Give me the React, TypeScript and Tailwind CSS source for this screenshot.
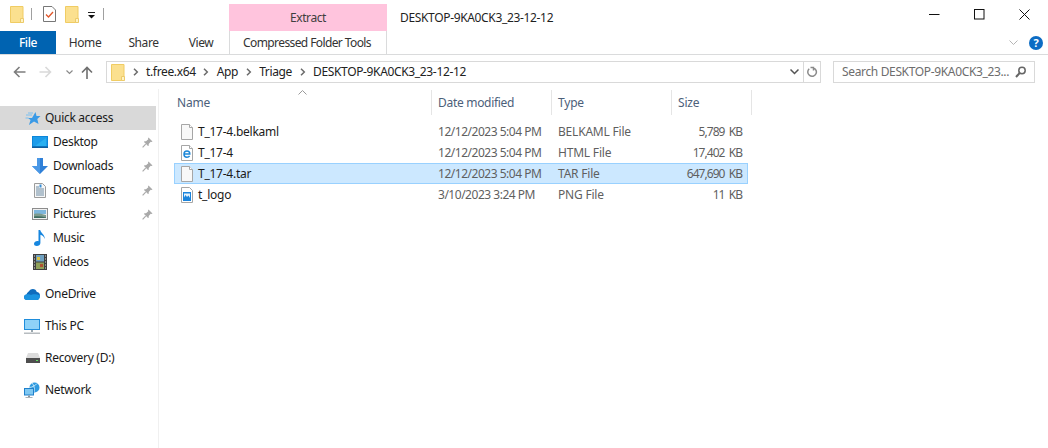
import React from "react";

const FolderIcon = () => (
  <svg width="14" height="17" viewBox="0 0 14 17" className="block shrink-0">
    <path d="M.5.5h12.500v16H.5z" fill="#fbe08f" stroke="#f0cc63" />
    <path d="M10.500 12.500h3v4h-3z" fill="#fff2c4" stroke="#eccb6a" />
  </svg>
);

const Chevron = () => (
  <svg width="6" height="8" viewBox="0 0 6 8" className="shrink-0 mx-[7.5px]">
    <path d="M1 .8 4.300 4 1 7.200" fill="none" stroke="#6b6b6b" strokeWidth="1.500" />
  </svg>
);

const Pin = () => (
  <svg width="11" height="11" viewBox="0 0 11 11" className="block">
    <path d="M6.500.5 10.500 4.500 9.500 5 8.700 4.700 6.700 7 6.700 8.700 6 9 2 5 2.400 4.300 4 4.300 6.300 2.300 6 1.300Z" fill="#a9a9a9" />
    <path d="M3.700 7.200.6 10.400" stroke="#a9a9a9" strokeWidth="1.200" />
  </svg>
);

const Star = () => (
  <svg width="16" height="15" viewBox="0 0 16 15" className="block">
    <path d="M10.500 1 11.500 5H15.500L12.300 8 13.500 13 9 10.500 4 14 5.500 9 3 7H7Z" fill="#3a9ae6" />
    <path d="M1 4h6M.5 7h3M3 2h5" stroke="#7cc0ef" strokeWidth="1" />
  </svg>
);

const Desktop = () => (
  <svg width="16" height="12" viewBox="0 0 16 12" className="block">
    <rect width="16" height="12" fill="#0c86d9" />
    <path d="M1 1h14v9H1z" fill="#1c9cea" />
    <path d="M3 10 14 2v8z" fill="#2bb0f0" />
    <path d="M0 10.500h16V12H0z" fill="#105e9c" />
  </svg>
);

const Downloads = () => (
  <svg width="16" height="16" viewBox="0 0 16 16" className="block">
    <path d="M5 0h6v8h5l-8 8-8-8h5z" fill="#2f80d8" />
    <path d="M5 0h3v16L0 8h5z" fill="#4a98e6" />
  </svg>
);

const Documents = () => (
  <svg width="12" height="15" viewBox="0 0 12 15" className="block">
    <path d="M.5.500h8l3 3v11H.5z" fill="#f7f7f7" stroke="#9c9c9c" />
    <path d="M2 4h3M2 6h8M2 8h8M2 10h8M2 12h8" stroke="#6d8ba3" />
    <path d="M5.500 1.500h2v3h-2z" fill="#3a90d8" />
  </svg>
);

const Pictures = () => (
  <svg width="16" height="12" viewBox="0 0 16 12" className="block">
    <rect x=".5" y=".5" width="15" height="11" fill="#f0f0f0" stroke="#8d8d8d" />
    <path d="M2 2h12v4H2z" fill="#7eb6dc" />
    <path d="M2 6c4-1 8 0 12 1v3H2z" fill="#7d9b8e" />
    <path d="M2 8.500c4-.5 8 0 12 1V10H2z" fill="#3e6c60" />
  </svg>
);

const Music = () => (
  <svg width="12" height="16" viewBox="0 0 12 16" className="block">
    <path d="M4.500 0h1.700c.4 3 5 4.600 4.500 9-.8-2.500-2.600-3.800-4.300-4.200V13c0 1.800-1.800 3-3.600 3C1.100 16 0 15 0 13.700 0 12.200 1.800 11 3.300 11c.5 0 .9.100 1.200.3z" fill="#1686df" />
  </svg>
);

const Videos = () => (
  <svg width="14" height="16" viewBox="0 0 14 16" className="block">
    <rect width="14" height="16" fill="#3f3f3f" />
    <path d="M3 1h8v6.500H3z" fill="#6fa0c0" />
    <path d="M3 8.500h8V15H3z" fill="#8fa05a" />
    <path d="M4 3h3v3H4z" fill="#d8c040" />
    <path d="M7 10h3v3H7z" fill="#b05030" />
    <path d="M1 2h1M1 5h1M1 8h1M1 11h1M1 14h1M12 2h1M12 5h1M12 8h1M12 11h1M12 14h1" stroke="#dedede" />
  </svg>
);

const Cloud = () => (
  <svg width="16" height="11" viewBox="0 0 16 11" className="block">
    <path d="M3 11C1.200 11 0 9.800 0 8.300 0 6.800 1.100 5.800 2.500 5.600 3 3.500 4.300 2.800 5 2.200 6 .8 7.300 0 8.800 0c2 0 3.500 1.200 4 3 1.700.2 3.200 1.500 3.200 3.200 0 2.700-1.500 4.800-3 4.800z" fill="#0f6cbd" />
    <path d="M3 11C1.200 11 0 9.800 0 8.300 0 6.800 1.100 5.800 2.500 5.600 4 5 5.800 5 7 6c1-1 6-1 9 .5 0 2.500-1.500 4.500-3 4.500z" fill="#1b93e0" />
  </svg>
);

const ThisPC = () => (
  <svg width="16" height="15" viewBox="0 0 16 15" className="block">
    <rect width="16" height="11" fill="#1f8ddb" />
    <rect x="1" y="1" width="14" height="9" fill="#8ed2f8" />
    <path d="M7 11h2v2H7z" fill="#9aa6ae" />
    <path d="M0 13.500h16V15H0z" fill="#b7bcc0" />
  </svg>
);

const Drive = () => (
  <svg width="14" height="10" viewBox="0 0 14 10" className="block">
    <path d="M2 0h10l2 5H0z" fill="#dcdcdc" />
    <rect y="5" width="14" height="5" fill="#4e4e4e" />
    <rect x="10" y="7" width="2" height="1" fill="#5fe05f" />
  </svg>
);

const Network = () => (
  <svg width="16" height="16" viewBox="0 0 16 16" className="block">
    <circle cx="10.500" cy="5.500" r="5" fill="#2f9ae0" />
    <path d="M8 1c2 2 3 6 2 9M13 1.500c-1.500 2-5 4-8 4" stroke="#bfe3f6" fill="none" />
    <rect y="6" width="10" height="7.500" fill="#1f80cc" />
    <rect x="1" y="7" width="8" height="5.500" fill="#7fc8f2" />
    <path d="M4 13.500h2V15H4z" fill="#8a96a0" />
    <path d="M1.500 15h7v1h-7z" fill="#a9b1b7" />
  </svg>
);

const BlankFile = () => (
  <svg width="12" height="16" viewBox="0 0 12 16" className="block">
    <path d="M.5.500h8l3 3v12H.5z" fill="#f8f8f8" stroke="#a6a6a6" />
    <path d="M8.500.500v3h3" fill="#fff" stroke="#a6a6a6" />
  </svg>
);

const HtmlFile = () => (
  <svg width="12" height="16" viewBox="0 0 12 16" className="block">
    <path d="M.5.500h8l3 3v12H.5z" fill="#fff" stroke="#a6a6a6" />
    <path d="M8.500.500v3h3" fill="#fff" stroke="#a6a6a6" />
    <path d="M3 9h5.800c0-2-1.100-3-2.800-3S3 7.200 3 9.200c0 1.900 1.300 3 3 3 1.200 0 2-.4 2.600-1.300" fill="none" stroke="#1e88d8" strokeWidth="1.500" />
  </svg>
);

const PngFile = () => (
  <svg width="12" height="16" viewBox="0 0 12 16" className="block">
    <path d="M.5.500h8l3 3v12H.5z" fill="#fff" stroke="#a6a6a6" />
    <rect x="2" y="5" width="8" height="9" fill="#1a84dc" />
    <path d="M3 6.500h6v4.500L7.500 8.500 6 10 4.500 8 3 10.500z" fill="#e4f2fb" />
  </svg>
);

const navGroups = [
  [
    { label: "Quick access", icon: <Star />, indent: "pl-[25px]", textGap: "ml-[4px]", active: true },
    { label: "Desktop", icon: <Desktop />, indent: "pl-[32px]", textGap: "ml-[5px]", pin: true },
    { label: "Downloads", icon: <Downloads />, indent: "pl-[32px]", textGap: "ml-[5px]", pin: true },
    { label: "Documents", icon: <Documents />, indent: "pl-[32px]", textGap: "ml-[5px]", pin: true },
    { label: "Pictures", icon: <Pictures />, indent: "pl-[32px]", textGap: "ml-[5px]", pin: true },
    { label: "Music", icon: <Music />, indent: "pl-[32px]", textGap: "ml-[5px]" },
    { label: "Videos", icon: <Videos />, indent: "pl-[32px]", textGap: "ml-[5px]" },
  ],
  [{ label: "OneDrive", icon: <Cloud />, indent: "pl-[24px]", textGap: "ml-[5px]" }],
  [{ label: "This PC", icon: <ThisPC />, indent: "pl-[24px]", textGap: "ml-[5px]" }],
  [{ label: "Recovery (D:)", icon: <Drive />, indent: "pl-[25px]", textGap: "ml-[4px]" }],
  [{ label: "Network", icon: <Network />, indent: "pl-[24px]", textGap: "ml-[5px]" }],
];

const files = [
  { name: "T_17-4.belkaml", date: "12/12/2023 5:04 PM", type: "BELKAML File", size: "5,789 KB", icon: <BlankFile /> },
  { name: "T_17-4", date: "12/12/2023 5:04 PM", type: "HTML File", size: "17,402 KB", icon: <HtmlFile /> },
  { name: "T_17-4.tar", date: "12/12/2023 5:04 PM", type: "TAR File", size: "647,690 KB", icon: <BlankFile />, selected: true },
  { name: "t_logo", date: "3/10/2023 3:24 PM", type: "PNG File", size: "11 KB", icon: <PngFile /> },
];

const crumbs = ["t.free.x64", "App", "Triage", "DESKTOP-9KA0CK3_23-12-12"];

export default function App() {
  return (
    <div className="w-[1048px] h-[448px] overflow-hidden bg-white flex flex-col text-[12px] leading-none text-[#1a1a1a] font-['Noto_Sans',sans-serif] tracking-[-0.2px]">
      {/* Title bar */}
      <div className="h-[31px] flex items-stretch shrink-0">
        <div className="w-[229px] flex items-center pl-[10px] pb-[3px]">
          <FolderIcon />
          <div className="w-px h-[12px] bg-[#a0a0a0] ml-[7px]" />
          <svg width="13" height="16" viewBox="0 0 13 16" className="ml-[11px]">
            <path d="M.5.500h8.500l3.500 3.500v11.500H.5z" fill="#fff" stroke="#777" />
            <path d="M3 8.500l2.500 2.500L10 6" fill="none" stroke="#e0562a" strokeWidth="1.300" />
          </svg>
          <div className="ml-[9px]"><FolderIcon /></div>
          <svg width="7" height="7" viewBox="0 0 7 7" className="ml-[9px] mt-[3px]">
            <path d="M0 .5h7" stroke="#222" />
            <path d="M0 3h7L3.500 6.500z" fill="#111" />
          </svg>
          <div className="w-px h-[12px] bg-[#a0a0a0] ml-[8px]" />
        </div>
        <div className="w-[158px] mt-[4px] bg-[#ffc4dd] flex items-center justify-center text-[#3f3f3f] pt-[1px] tracking-[-0.4px]">Extract</div>
        <div className="pl-[13px] pt-[12px] text-[#1f1f1f] flex-1 tracking-[-0.34px]">DESKTOP-9KA0CK3_23-12-12</div>
        <div className="flex items-start pt-[9px] pr-[18px] gap-[34px]">
          <svg width="11" height="11" viewBox="0 0 11 11"><path d="M0 5.500h10.500" stroke="#111" /></svg>
          <svg width="11" height="11" viewBox="0 0 11 11"><rect x=".5" y=".5" width="9.500" height="9.500" fill="none" stroke="#111" /></svg>
          <svg width="11" height="11" viewBox="0 0 11 11"><path d="M.5.500l10 10M10.500.500l-10 10" stroke="#111" /></svg>
        </div>
      </div>

      {/* Ribbon tabs */}
      <div className="h-[24px] shrink-0 border-b border-[#dadbdc] flex items-stretch tracking-[-0.4px]">
        <div className="w-[56px] h-[23px] bg-[#0063b1] text-white flex items-center justify-center font-medium">File</div>
        <div className="w-[58px] flex items-center justify-center text-[#333]">Home</div>
        <div className="w-[59px] flex items-center justify-center text-[#333]">Share</div>
        <div className="w-[56px] flex items-center justify-center text-[#333]">View</div>
        <div className="w-[158px] h-[23px] border-x border-[#dadbdc] flex items-center justify-center pr-[2px] text-[#333] tracking-[-0.6px]">Compressed Folder Tools</div>
        <div className="flex-1 flex justify-end items-center pr-[5px] gap-[11px]">
          <svg width="9" height="6" viewBox="0 0 9 6"><path d="M.5.500 4.500 4.500 8.500.500" fill="none" stroke="#b5b5b5" /></svg>
          <div className="w-[14px] h-[14px] rounded-full bg-[#0c6cc4] text-white text-[11px] font-bold flex items-center justify-center">?</div>
        </div>
      </div>

      {/* Address row */}
      <div className="h-[34px] shrink-0 flex items-start pt-[6px]">
        <div className="w-[106px] h-[22px] flex items-center pl-[13px]">
          <svg width="13" height="12" viewBox="0 0 13 12"><path d="M12.500 6H1.500M6.500 1 1.500 6l5 5" fill="none" stroke="#7d7d7d" strokeWidth="1.600" /></svg>
          <svg width="13" height="12" viewBox="0 0 13 12" className="ml-[13px]"><path d="M.5 6h11M6.500 1l5 5-5 5" fill="none" stroke="#d9d9d9" strokeWidth="1.600" /></svg>
          <svg width="7" height="5" viewBox="0 0 7 5" className="ml-[14px]"><path d="M.5.500 3.500 3.500 6.500.500" fill="none" stroke="#8a8a8a" strokeWidth="1.200" /></svg>
          <svg width="12" height="13" viewBox="0 0 12 13" className="ml-[8px]"><path d="M6 13V1.500M1 6.500l5-5 5 5" fill="none" stroke="#6f6f6f" strokeWidth="1.600" /></svg>
        </div>
        <div className="w-[715px] h-[22px] border border-[#d9d9d9] flex items-center">
          <div className="pl-[4px]"><FolderIcon /></div>
          <div className="flex items-center flex-1 text-[#222] tracking-[-0.35px]">
            {crumbs.map((c) => (
              <React.Fragment key={c}>
                <Chevron />
                <span>{c}</span>
              </React.Fragment>
            ))}
          </div>
          <svg width="9" height="6" viewBox="0 0 9 6" className="mr-[4px]"><path d="M.5.500 4.500 4.500 8.500.500" fill="none" stroke="#555" strokeWidth="1.500" /></svg>
          <div className="w-[17px] h-full border-l border-[#d9d9d9] flex items-center justify-center">
            <svg width="11" height="12" viewBox="0 0 11 12"><path d="M3.500 1.500h3v3M6 1.800a4.300 4.300 0 1 1-3.800 1" fill="none" stroke="#8a8a8a" strokeWidth="1.500" /></svg>
          </div>
        </div>
        <div className="ml-[12px] w-[202px] h-[22px] border border-[#d9d9d9] flex items-center pl-[8px] text-[#6d6d6d]">
          <span className="flex-1 whitespace-nowrap tracking-[-0.35px]">Search DESKTOP-9KA0CK3_23...</span>
          <svg width="11" height="12" viewBox="0 0 11 12" className="mr-[8px] shrink-0"><circle cx="7" cy="4.500" r="3.200" fill="none" stroke="#666" strokeWidth="1.500" /><path d="M4.700 7 1 11" stroke="#666" strokeWidth="2" /></svg>
        </div>
      </div>

      {/* Body */}
      <div className="flex-1 flex min-h-0">
        {/* Sidebar */}
        <div className="w-[159px] shrink-0 border-r border-[#f0f0f0] pr-[2px] pt-[17px] flex flex-col gap-[8px] tracking-[-0.3px]">
          {navGroups.map((group, i) => (
            <div key={i} className="flex flex-col">
              {group.map((item) => (
                <div key={item.label} className={`h-[24px] flex items-center ${item.indent} ${item.active ? "bg-[#d9d9d9]" : ""} text-[#1a1a1a]`}>
                  <div className="w-[16px] flex items-center justify-center shrink-0">{item.icon}</div>
                  <span className={`${item.textGap} flex-1`}>{item.label}</span>
                  {item.pin && <div className="mr-[3px]"><Pin /></div>}
                </div>
              ))}
            </div>
          ))}
        </div>

        {/* File list */}
        <div className="flex-1 pl-[14px]">
          <div className="h-[25px] mt-[1px] flex text-[#4c607a] relative">
            <svg width="9" height="5" viewBox="0 0 9 5" className="absolute left-[125px] top-0"><path d="M.5 4.500 4.500.500 8.500 4.500" fill="none" stroke="#9a9a9a" /></svg>
            <div className="w-[259px] pl-[4px] pt-[7px] border-r border-[#e5e5e5]">Name</div>
            <div className="w-[120px] pl-[6px] pt-[7px] border-r border-[#e5e5e5] tracking-[-0.3px]">Date modified</div>
            <div className="w-[120px] pl-[6px] pt-[7px] border-r border-[#e5e5e5]">Type</div>
            <div className="w-[80px] pl-[6px] pt-[7px] border-r border-[#e5e5e5]">Size</div>
          </div>
          <div className="mt-[6px] flex flex-col w-[574px] ml-[1px]">
            {files.map((f) => (
              <div key={f.name} className={`h-[21px] flex items-center text-[#5f5f5f] border ${f.selected ? "bg-[#cce8ff] border-[#99d1ff]" : "border-transparent"}`}>
                <div className="w-[257px] flex items-center pl-[6px]">
                  {f.icon}
                  <span className="ml-[5px] text-[#1a1a1a] tracking-[-0.25px]">{f.name}</span>
                </div>
                <div className="w-[120px] pl-[6px] tracking-[-0.48px]">{f.date}</div>
                <div className="w-[119px] pl-[6px]">{f.type}</div>
                <div className="w-[71px] text-right tracking-[-0.95px] [word-spacing:2px]">{f.size}</div>
              </div>
            ))}
          </div>
        </div>
      </div>
    </div>
  );
}
